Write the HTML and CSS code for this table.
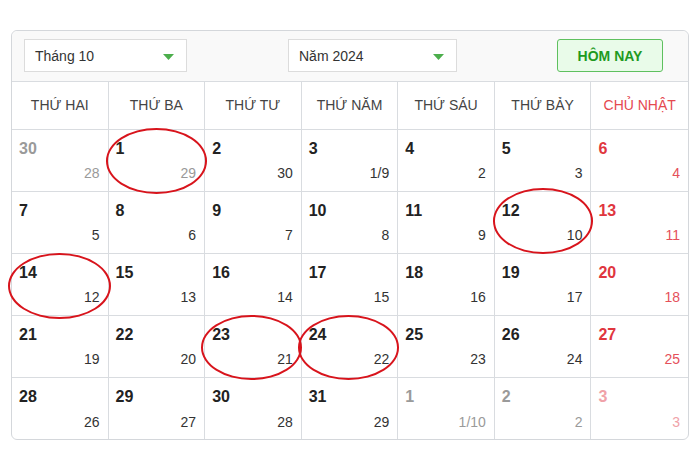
FILE: index.html
```html
<!DOCTYPE html>
<html lang="vi">
<head>
<meta charset="utf-8">
<title>Lịch tháng 10 năm 2024</title>
<link rel="stylesheet" href="styles.css">
</head>
<body>
<div class="cal">
  <div class="bar">
    <div class="sel sel-month">
      <span>Tháng 10</span>
      <svg class="caret" width="11" height="6" viewBox="0 0 11 6"><path d="M0 0H11L5.5 6Z" fill="#4cae4c"/></svg>
    </div>
    <div class="sel sel-year">
      <span>Năm 2024</span>
      <svg class="caret" width="11" height="6" viewBox="0 0 11 6"><path d="M0 0H11L5.5 6Z" fill="#4cae4c"/></svg>
    </div>
    <button class="today">HÔM NAY</button>
  </div>
  <div class="grid">
    <div class="wd">THỨ HAI</div>
    <div class="wd">THỨ BA</div>
    <div class="wd">THỨ TƯ</div>
    <div class="wd">THỨ NĂM</div>
    <div class="wd">THỨ SÁU</div>
    <div class="wd">THỨ BẢY</div>
    <div class="wd sun">CHỦ NHẬT</div>

    <div class="day muted"><b>30</b><i>28</i></div>
    <div class="day"><b>1</b><i class="grey">29</i><span class="mark"></span></div>
    <div class="day"><b>2</b><i>30</i></div>
    <div class="day"><b>3</b><i>1/9</i></div>
    <div class="day"><b>4</b><i>2</i></div>
    <div class="day"><b>5</b><i>3</i></div>
    <div class="day sun"><b>6</b><i>4</i></div>

    <div class="day"><b>7</b><i>5</i></div>
    <div class="day"><b>8</b><i>6</i></div>
    <div class="day"><b>9</b><i>7</i></div>
    <div class="day"><b>10</b><i>8</i></div>
    <div class="day"><b>11</b><i>9</i></div>
    <div class="day"><b>12</b><i>10</i><span class="mark m12"></span></div>
    <div class="day sun"><b>13</b><i>11</i></div>

    <div class="day"><b>14</b><i>12</i><span class="mark m14"></span></div>
    <div class="day"><b>15</b><i>13</i></div>
    <div class="day"><b>16</b><i>14</i></div>
    <div class="day"><b>17</b><i>15</i></div>
    <div class="day"><b>18</b><i>16</i></div>
    <div class="day"><b>19</b><i>17</i></div>
    <div class="day sun"><b>20</b><i>18</i></div>

    <div class="day"><b>21</b><i>19</i></div>
    <div class="day"><b>22</b><i>20</i></div>
    <div class="day"><b>23</b><i>21</i><span class="mark m23"></span></div>
    <div class="day"><b>24</b><i>22</i><span class="mark m24"></span></div>
    <div class="day"><b>25</b><i>23</i></div>
    <div class="day"><b>26</b><i>24</i></div>
    <div class="day sun"><b>27</b><i>25</i></div>

    <div class="day last"><b>28</b><i>26</i></div>
    <div class="day last"><b>29</b><i>27</i></div>
    <div class="day last"><b>30</b><i>28</i></div>
    <div class="day last"><b>31</b><i>29</i></div>
    <div class="day last muted"><b>1</b><i>1/10</i></div>
    <div class="day last muted"><b>2</b><i>2</i></div>
    <div class="day last sun muted-sun"><b>3</b><i>3</i></div>
  </div>
</div>
</body>
</html>
```
FILE: styles.css
```css
* { box-sizing: border-box; }
html, body { margin: 0; padding: 0; background: #fff; }
body {
  font-family: "Liberation Sans", Arial, sans-serif;
  color: #222;
}
.cal {
  margin: 30px 11px 0 11px;
  border: 1px solid #d4d7db;
  border-radius: 6px;
  overflow: visible;
  background: #fff;
}
.bar {
  height: 51px;
  display: flex;
  align-items: center;
  padding: 0 0 1px 12px;
  background: #f9f9f9;
  border-bottom: 1px solid #d9dce0;
  border-radius: 6px 6px 0 0;
}
.sel {
  height: 33px;
  background: #fff;
  border: 1px solid #dcdcdc;
  display: flex;
  align-items: center;
  justify-content: space-between;
  padding: 0 12px 0 10px;
  font-size: 14px;
  color: #333;
}
.sel-month { width: 163px; }
.sel-year { width: 169px; margin-left: 101px; }
.caret { margin-top: 2px; }
.today {
  margin-left: auto;
  margin-right: 25px;
  width: 106px;
  height: 33px;
  border: 1px solid #5fc05f;
  background: #e9fbe9;
  border-radius: 3px;
  color: #1f9a1f;
  font-family: "Liberation Sans", Arial, sans-serif;
  font-weight: bold;
  font-size: 14px;
  padding: 0;
}
.grid {
  display: grid;
  grid-template-columns: repeat(7, 1fr);
  grid-template-rows: 48px repeat(4, 62px) 61px;
}
.wd {
  display: flex;
  align-items: center;
  justify-content: center;
  font-size: 14px;
  color: #444;
  border-right: 1px solid #d9dce0;
  border-bottom: 1px solid #d9dce0;
  padding-bottom: 1px;
}
.wd:nth-child(7n) { border-right: none; }
.wd.sun { color: #e5484f; }
.day {
  position: relative;
  display: flex;
  flex-direction: column;
  justify-content: space-between;
  padding: 10px 8px 10px 7px;
  border-right: 1px solid #d9dce0;
  border-bottom: 1px solid #d9dce0;
}
.day:nth-child(7n) { border-right: none; }
.day.last { border-bottom: none; padding-bottom: 9px; }
.day b {
  font-size: 16px;
  font-weight: bold;
  line-height: 18px;
  color: #222;
}
.day i {
  font-style: normal;
  font-size: 14px;
  line-height: 16px;
  text-align: right;
  color: #333;
}
.day i.grey { color: #999; }
.day.muted b, .day.muted i { color: #9a9a9a; }
.day.sun b { color: #e0363e; }
.day.sun i { color: #e5505a; }
.day.muted-sun b, .day.muted-sun i { color: #f0a2a8; }
.mark {
  position: absolute;
  top: -2px;
  left: -3px;
  right: -3px;
  bottom: -3px;
  border: 2px solid #d8141c;
  border-radius: 50%;
  pointer-events: none;
}
.mark.m12 { top: -4px; left: -2px; right: -3px; bottom: -1px; }
.mark.m14 { top: -1px; left: -4px; right: -3px; bottom: -4px; }
.mark.m23 { top: -1px; left: -4px; right: -1px; bottom: -3px; }
.mark.m24 { top: -1px; left: -4px; right: -2px; bottom: -3px; }
```
